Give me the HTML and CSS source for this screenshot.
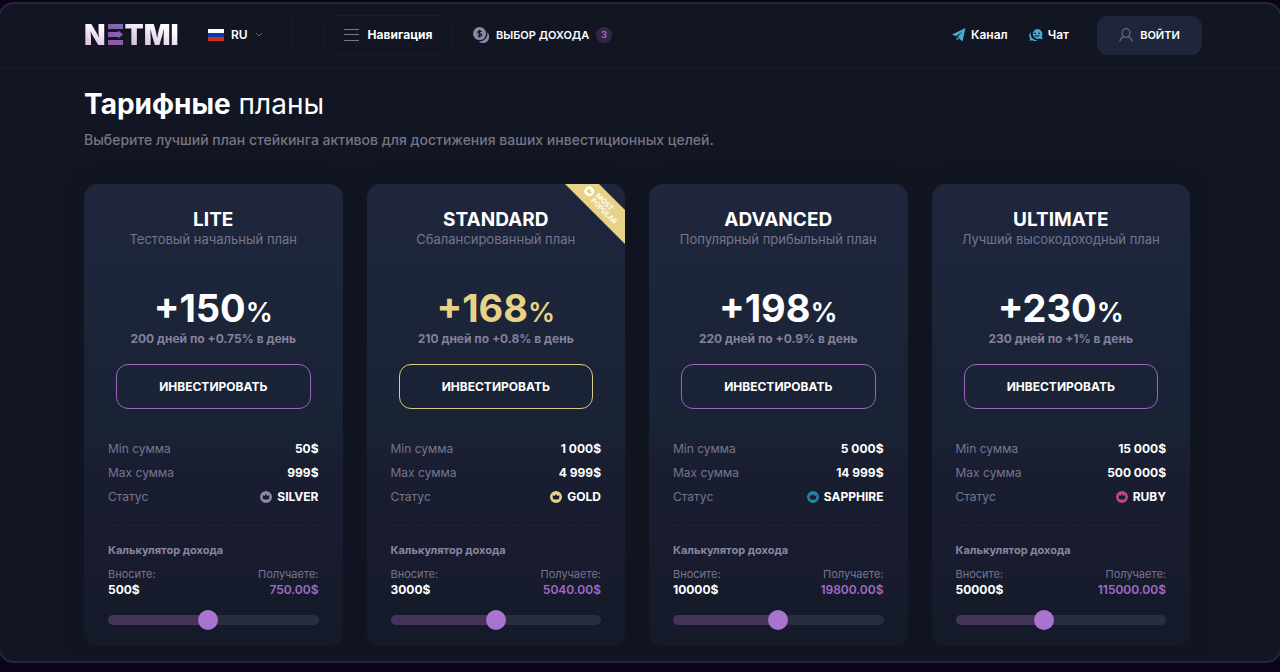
FILE: index.html
```html
<!DOCTYPE html>
<html lang="ru">
<head>
<meta charset="utf-8">
<meta name="viewport" content="width=device-width, initial-scale=1">
<title>NETMI — Тарифные планы</title>
<link rel="stylesheet" href="styles.css">
</head>
<body>
<svg class="sprite" aria-hidden="true">
  <symbol id="crown" viewBox="0 0 12 12">
    <path fill-rule="evenodd" d="M6 0a6 6 0 1 1 0 12A6 6 0 0 1 6 0ZM2.500 4.300l.5 3.700q3 1.200 6 0l.5-3.700-2 .8L6 3 4.500 5.100Z"/>
  </symbol>
</svg>
<div class="frame">
  <header class="header">
    <a class="logo" href="#" aria-label="NETMI">
      <span class="logo-text">N</span>
      <svg class="logo-mark" viewBox="0 0 15 22" aria-hidden="true">
        <defs><linearGradient id="mark" x1="0" y1="1" x2="1" y2="0"><stop offset="0" stop-color="#9b4fa5"/><stop offset="1" stop-color="#7470b8"/></linearGradient></defs>
        <path fill="url(#mark)" d="M0 0H15V5H0ZM0 16H15V21H0ZM0 8H10V6.500L15 10.500 10 14.500V13H0Z"/>
      </svg>
      <span class="logo-text">TMI</span>
    </a>
    <button class="lang" type="button">
      <svg class="flag" viewBox="0 0 16 12" aria-hidden="true"><path fill="#fff" d="M0 0h16v4H0z"/><path fill="#0b3bb0" d="M0 4h16v4H0z"/><path fill="#d52b1e" d="M0 8h16v4H0z"/></svg>
      <span>RU</span>
      <svg class="chevron" viewBox="0 0 8 6" aria-hidden="true"><path d="M1 1l3 3 3-3"/></svg>
    </button>
    <button class="menu" type="button">
      <svg class="burger" viewBox="0 0 15 12" aria-hidden="true"><path d="M0 .5h15M0 5.500h15M0 11.500h15"/></svg>
      <span>Навигация</span>
    </button>
    <a class="income" href="#">
      <svg class="coins" viewBox="0 0 16 16" aria-hidden="true">
        <path d="M14.200 5A7.800 7.800 0 0 1 5.200 14.300a5.800 5.800 0 0 0 9-9.300Z"/>
        <circle cx="6.600" cy="6.600" r="6.500"/>
        <path class="coin-sign" d="M8.600 4.700C8 3.800 4.700 3.700 4.700 5.300c0 1.700 4 .9 4 2.700 0 1.600-3.400 1.500-4.100.4M6.600 2.800v7.600"/>
      </svg>
      <span>ВЫБОР ДОХОДА</span>
      <span class="count">3</span>
    </a>
    <nav class="social">
      <a href="#">
        <svg class="plane" viewBox="0 0 14 14" aria-hidden="true"><path d="M13.500 0 0 6.600l4 1.600L10.500 3.400 5.500 9 10.500 13.500Z"/><path d="M4.600 9.200v3.600l2-1.900Z"/></svg>
        Канал
      </a>
      <a href="#">
        <svg class="chat" viewBox="0 0 14 12" aria-hidden="true">
          <path fill-rule="evenodd" d="M8 0a5.300 5 0 0 1 4.900 7l.7 3.400-2.700-.8A5.300 5 0 1 1 8 0ZM6 3.400a.9.9 0 1 0 0 1.800.9.9 0 0 0 0-1.800ZM10 3.400a.9.9 0 1 0 0 1.800.9.9 0 0 0 0-1.800ZM5.400 6.400q2.600 2.600 5.200 0l-.5-.4q-2.100 1.600-4.200 0Z"/>
          <path d="M2 3.200a6 6 0 0 0 6.800 7.900A5 5 0 0 1 3.300 11.200L.4 11.800l.7-2.400A4.600 4.600 0 0 1 2 3.200Z"/>
        </svg>
        Чат
      </a>
    </nav>
    <button class="login" type="button">
      <svg class="user" viewBox="0 0 14 14" aria-hidden="true"><ellipse cx="7" cy="5" rx="4" ry="4.300"/><path d="M.8 13.300C1.200 11 2.700 9.600 4.600 8.800M13.200 13.300C12.800 11 11.300 9.600 9.400 8.800"/></svg>
      <span>ВОЙТИ</span>
    </button>
  </header>

  <main class="main">
    <h1 class="title"><b>Тарифные</b> планы</h1>
    <p class="lead">Выберите лучший план стейкинга активов для достижения ваших инвестиционных целей.</p>

    <div class="plans">
      <article class="plan">
        <div class="plan-head"><h2>LITE</h2><p>Тестовый начальный план</p></div>
        <p class="rate">+150<small>%</small></p>
        <p class="term">200 дней по +0.75% в день</p>
        <button class="invest" type="button">ИНВЕСТИРОВАТЬ</button>
        <dl class="facts">
          <div><dt>Min сумма</dt><dd>50$</dd></div>
          <div><dt>Max сумма</dt><dd>999$</dd></div>
          <div><dt>Статус</dt><dd><svg class="status silver" aria-hidden="true"><use href="#crown"/></svg>SILVER</dd></div>
        </dl>
        <section class="calc">
          <h3>Калькулятор дохода</h3>
          <div class="calc-row"><label for="lite">Вносите:</label><span>Получаете:</span></div>
          <div class="calc-values"><b>500$</b><output for="lite">750.00$</output></div>
          <input id="lite" class="range" type="range" min="0" max="100" value="47" style="--fill:47%">
        </section>
      </article>

      <article class="plan popular">
        <div class="ribbon"><svg aria-hidden="true"><use href="#crown"/></svg><span>MOST<br>POPULAR</span></div>
        <div class="plan-head"><h2>STANDARD</h2><p>Сбалансированный план</p></div>
        <p class="rate">+168<small>%</small></p>
        <p class="term">210 дней по +0.8% в день</p>
        <button class="invest" type="button">ИНВЕСТИРОВАТЬ</button>
        <dl class="facts">
          <div><dt>Min сумма</dt><dd>1 000$</dd></div>
          <div><dt>Max сумма</dt><dd>4 999$</dd></div>
          <div><dt>Статус</dt><dd><svg class="status gold" aria-hidden="true"><use href="#crown"/></svg>GOLD</dd></div>
        </dl>
        <section class="calc">
          <h3>Калькулятор дохода</h3>
          <div class="calc-row"><label for="standard">Вносите:</label><span>Получаете:</span></div>
          <div class="calc-values"><b>3000$</b><output for="standard">5040.00$</output></div>
          <input id="standard" class="range" type="range" min="0" max="100" value="50" style="--fill:50%">
        </section>
      </article>

      <article class="plan">
        <div class="plan-head"><h2>ADVANCED</h2><p>Популярный прибыльный план</p></div>
        <p class="rate">+198<small>%</small></p>
        <p class="term">220 дней по +0.9% в день</p>
        <button class="invest" type="button">ИНВЕСТИРОВАТЬ</button>
        <dl class="facts">
          <div><dt>Min сумма</dt><dd>5 000$</dd></div>
          <div><dt>Max сумма</dt><dd>14 999$</dd></div>
          <div><dt>Статус</dt><dd><svg class="status sapphire" aria-hidden="true"><use href="#crown"/></svg>SAPPHIRE</dd></div>
        </dl>
        <section class="calc">
          <h3>Калькулятор дохода</h3>
          <div class="calc-row"><label for="advanced">Вносите:</label><span>Получаете:</span></div>
          <div class="calc-values"><b>10000$</b><output for="advanced">19800.00$</output></div>
          <input id="advanced" class="range" type="range" min="0" max="100" value="50" style="--fill:50%">
        </section>
      </article>

      <article class="plan">
        <div class="plan-head"><h2>ULTIMATE</h2><p>Лучший высокодоходный план</p></div>
        <p class="rate">+230<small>%</small></p>
        <p class="term">230 дней по +1% в день</p>
        <button class="invest" type="button">ИНВЕСТИРОВАТЬ</button>
        <dl class="facts">
          <div><dt>Min сумма</dt><dd>15 000$</dd></div>
          <div><dt>Max сумма</dt><dd>500 000$</dd></div>
          <div><dt>Статус</dt><dd><svg class="status ruby" aria-hidden="true"><use href="#crown"/></svg>RUBY</dd></div>
        </dl>
        <section class="calc">
          <h3>Калькулятор дохода</h3>
          <div class="calc-row"><label for="ultimate">Вносите:</label><span>Получаете:</span></div>
          <div class="calc-values"><b>50000$</b><output for="ultimate">115000.00$</output></div>
          <input id="ultimate" class="range" type="range" min="0" max="100" value="41" style="--fill:41%">
        </section>
      </article>
    </div>
  </main>
</div>
</body>
</html>
```

FILE: styles.css
```css
* { box-sizing: border-box; }

body {
  margin: 0;
  padding: 2px 0 8px;
  overflow-x: hidden;
  background: #0c0419;
  color: #fff;
  font-family: Inter, "Liberation Sans", sans-serif;
  font-size: 12px;
  line-height: 16px;
}

h1, h2, h3, p, dl, dd { margin: 0; }
a { color: inherit; text-decoration: none; }
button { font: inherit; color: inherit; background: none; border: 0; padding: 0; cursor: pointer; }
.sprite { position: absolute; width: 0; height: 0; }

.frame {
  margin: 0 -2px;
  border: 2px solid #27243d;
  border-radius: 16px;
  background: #111622;
}

/* Header */
.header {
  display: flex;
  align-items: center;
  padding: 11px 78px 12px 84px;
  border-bottom: 1px solid #1b1b2b;
  font-weight: 600;
}

.logo { display: flex; align-items: center; gap: 2px; width: 92px; }
.logo-text {
  font-size: 28px;
  line-height: 32px;
  font-weight: 900;
  background: linear-gradient(20deg, #d3b2dc 10%, #fff 75%);
  background-clip: text;
  -webkit-background-clip: text;
  color: transparent;
}
.logo-mark { width: 15px; height: 22px; flex: none; }

.lang {
  display: flex;
  align-items: center;
  gap: 7px;
  width: 84px;
  height: 34px;
  margin-left: 32px;
  border-right: 1px solid #1b1b2b;
}
.flag { width: 16px; height: 12px; }
.chevron { width: 8px; height: 6px; fill: none; stroke: #6d6783; }

.menu {
  display: flex;
  align-items: center;
  justify-content: center;
  gap: 9px;
  width: 128px;
  height: 40px;
  margin-left: 32px;
  border: 1px solid #1b1b2b;
  border-radius: 12px;
  font-weight: 700;
}
.burger { width: 15px; height: 12px; stroke: #7d7693; }

.income { display: flex; align-items: center; gap: 7px; margin-left: 21px; font-size: 11px; }
.coins { width: 16px; height: 16px; fill: #8f86a8; }
.coin-sign { fill: none; stroke: #111622; stroke-width: 1.2; }
.count {
  width: 16px;
  border-radius: 8px;
  background: #33264a;
  color: #a872d0;
  font-size: 9px;
  text-align: center;
}

.social { display: flex; gap: 21px; margin-left: auto; }
.social a { display: flex; align-items: center; gap: 5px; }
.social svg { fill: #48acd0; }
.plane { width: 14px; height: 14px; }
.chat { width: 14px; height: 12px; }

.login {
  display: flex;
  align-items: center;
  justify-content: center;
  gap: 7px;
  width: 105px;
  height: 39px;
  margin-left: 28px;
  border-radius: 11px;
  background: #1f263b;
  font-size: 11px;
}
.user { width: 14px; height: 14px; fill: none; stroke: #6d6783; stroke-width: 1.2; }

/* Plans */
.main { padding: 20px 90px 15px 84px; }
.title { font-size: 28px; line-height: 32px; font-weight: 400; }
.title b { font-weight: 700; }
.lead { margin-top: 10px; font-size: 14px; line-height: 20px; font-weight: 500; color: #77748a; }

.plans {
  display: grid;
  grid-template-columns: repeat(4, 1fr);
  gap: 24px;
  margin-top: 34px;
}

.plan {
  position: relative;
  overflow: hidden;
  padding: 24px 24px 16px;
  border-radius: 14px;
  background: linear-gradient(#1f263d, #192334 54%, #191d30 62%, #181c2e 80%, #141a28);
  box-shadow: 0 0 20px #16142266;
  text-align: center;
}
.plan-head { padding-bottom: 16px; border-bottom: 1px dashed #22293d; color: #77748f; font-size: 13px; line-height: 15px; }
.plan-head h2 { color: #fff; font-size: 19px; line-height: 24px; font-weight: 700; }

.rate { margin-top: 22px; font-size: 38px; line-height: 44px; font-weight: 700; }
.rate small { font-size: 27px; line-height: 1; font-weight: 600; }
.popular .rate { color: #e8d287; }
.term { margin-top: 1px; color: #84809c; font-size: 12px; font-weight: 700; }

.invest {
  display: block;
  width: calc(100% - 16px);
  height: 45px;
  margin: 17px auto 0;
  border: 1px solid #9b65bf;
  border-radius: 12px;
  font-weight: 700;
}
.popular .invest { border-color: #dcc982; }

.facts { margin-top: 28px; padding-bottom: 16px; border-bottom: 1px dashed #22283b; line-height: 24px; }
.facts div { display: flex; justify-content: space-between; }
.facts dt { color: #77748f; }
.facts dd { display: flex; align-items: center; gap: 5px; font-weight: 700; }
.status { width: 12px; height: 12px; }
.silver { fill: #8f86a8; }
.gold { fill: #e8d287; }
.sapphire { fill: #2384a4; }
.ruby { fill: #c4487e; }

.calc { padding-top: 16px; text-align: left; }
.calc h3 { color: #8a86a0; font-size: 11px; line-height: 16px; font-weight: 700; }
.calc-row, .calc-values { display: flex; justify-content: space-between; font-size: 11px; }
.calc-row { margin-top: 8px; color: #77748f; }
.calc-values { font-size: 12px; font-weight: 600; }
.calc-values b { font-weight: 700; }
.calc-values output { color: #a269c9; }

.range {
  appearance: none;
  display: block;
  width: 100%;
  height: 20px;
  margin: 12px 0 0;
  background: none;
}
.range::-webkit-slider-runnable-track {
  height: 10px;
  border-radius: 5px;
  background: linear-gradient(90deg, #45335c var(--fill), #292d41 var(--fill));
}
.range::-webkit-slider-thumb {
  appearance: none;
  width: 20px;
  height: 20px;
  margin-top: -5px;
  border-radius: 50%;
  background: #a974d0;
}

.ribbon {
  position: absolute;
  top: 8px;
  right: -37px;
  display: flex;
  align-items: center;
  justify-content: center;
  gap: 3px;
  width: 120px;
  height: 24px;
  background: #e8d287;
  font-size: 7px;
  line-height: 7px;
  font-weight: 600;
  text-align: left;
  color: #fff;
  transform: rotate(45deg);
}
.ribbon svg { width: 10px; height: 10px; fill: #fff; }
```
